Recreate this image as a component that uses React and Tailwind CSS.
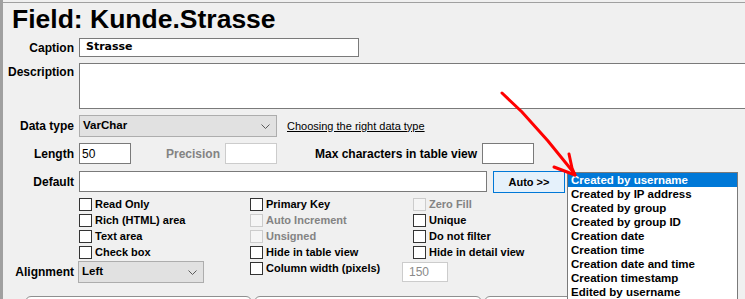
import React from "react";

const Chevron = () => (
  <svg width="9" height="5" viewBox="0 0 9 5" className="shrink-0">
    <path d="M0.5 0.5 L4.5 4.5 L8.5 0.5" fill="none" stroke="#5a5a5a" strokeWidth="1" />
  </svg>
);

const Select = ({ value, className }) => (
  <div
    className={`flex items-center justify-between h-[22px] bg-[#e1e1e1] border border-[#adadad] pl-[3px] pr-[6px] text-[11.5px] font-bold ${className}`}
  >
    <span>{value}</span>
    <Chevron />
  </div>
);

const Label = ({ children, className = "" }) => (
  <div className={`w-[71px] shrink-0 text-right text-[12px] font-bold leading-[14px] ${className}`}>
    {children}
  </div>
);

const Check = ({ label, disabled }) => (
  <div className="flex items-center h-[16px]">
    <span
      className={`w-[13px] h-[13px] shrink-0 border ${
        disabled ? "border-[#cccccc] bg-[#f5f5f5]" : "border-[#333333] bg-white"
      }`}
    />
    <span
      className={`ml-[3px] text-[11px] font-bold whitespace-nowrap ${
        disabled ? "text-[#838383]" : "text-black"
      }`}
    >
      {label}
    </span>
  </div>
);

const checks = [
  ["Read Only"],
  ["Primary Key"],
  ["Zero Fill", true],
  ["Rich (HTML) area"],
  ["Auto Increment", true],
  ["Unique"],
  ["Text area"],
  ["Unsigned", true],
  ["Do not filter"],
  ["Check box"],
  ["Hide in table view"],
  ["Hide in detail view"],
];

const autoItems = [
  "Created by username",
  "Created by IP address",
  "Created by group",
  "Created by group ID",
  "Creation date",
  "Creation time",
  "Creation date and time",
  "Creation timestamp",
  "Edited by username",
];

export default function App() {
  return (
    <div className="relative w-[745px] h-[299px] overflow-hidden flex bg-[#f0f0f0] text-black font-['Liberation_Sans',Arial,sans-serif]">
      <div className="w-[3px] shrink-0 bg-[#a0a0a0]" />
      <div className="flex-1 mt-[2px] border-t border-[#a0a0a0] flex flex-col">
        <h1 className="mt-[1px] pl-[9px] text-[26.5px] leading-[30px] font-bold whitespace-nowrap">
          Field: Kunde.Strasse
        </h1>

        {/* caption */}
        <div className="mt-[4px] flex items-center gap-[5px]">
          <Label>Caption</Label>
          <div className="w-[280px] h-[19px] border border-[#7a7a7a] bg-white pl-[6px] flex items-center text-[11px] font-bold font-['DejaVu_Sans',Verdana,sans-serif]">
            Strasse
          </div>
        </div>

        {/* description */}
        <div className="mt-[6px] flex items-start gap-[5px]">
          <Label className="pt-[2px]">Description</Label>
          <div className="w-[700px] h-[46px] shrink-0 border border-[#7a7a7a] bg-white" />
        </div>

        {/* data type */}
        <div className="mt-[6px] flex items-center gap-[5px]">
          <Label>Data type</Label>
          <Select value="VarChar" className="w-[198px]" />
          <a className="ml-[5px] text-[11px] underline whitespace-nowrap">Choosing the right data type</a>
        </div>

        {/* length */}
        <div className="mt-[6px] flex items-center">
          <Label>Length</Label>
          <div className="ml-[5px] w-[52px] h-[21px] border border-[#7a7a7a] bg-white pl-[2px] flex items-center text-[12px]">
            50
          </div>
          <div className="ml-[35px] w-[54px] text-[12px] font-bold text-[#838383] whitespace-nowrap">Precision</div>
          <div className="ml-[5px] w-[52px] h-[21px] border border-[#cccccc] bg-white" />
          <div className="ml-[38px] text-[12px] font-bold whitespace-nowrap">Max characters in table view</div>
          <div className="ml-[5px] w-[52px] h-[21px] border border-[#7a7a7a] bg-white" />
        </div>

        {/* default */}
        <div className="mt-[7px] flex items-start gap-[5px]">
          <Label className="h-[21px] flex items-center justify-end">Default</Label>
          <div className="w-[408px] h-[21px] border border-[#7a7a7a] bg-white" />
          <button className="ml-[1px] w-[72px] h-[22px] border border-[#0078d7] bg-[#e5f1fb] text-[11px] font-bold">
            Auto &gt;&gt;
          </button>
        </div>

        {/* checkboxes */}
        <div className="mt-[3px] pl-[76px] grid grid-cols-[171px_163px_1fr]">
          {checks.map(([label, disabled]) => (
            <Check key={label} label={label} disabled={disabled} />
          ))}
        </div>

        {/* alignment row */}
        <div className="flex items-start">
          <div className="mt-[1px] flex items-center gap-[4px]">
            <Label>Alignment</Label>
            <Select value="Left" className="w-[126px]" />
          </div>
          <div className="ml-[46px] w-[152px]">
            <Check label="Column width (pixels)" />
          </div>
          <div className="mt-[2px] w-[46px] h-[20px] border border-[#cccccc] bg-white pl-[6px] flex items-center text-[12px] text-[#8a8a8a]">
            150
          </div>
        </div>

        {/* tabs */}
        <div className="mt-[13px] ml-[22px] flex gap-[2px]">
          <div className="w-[227px] h-[12px] shrink-0 border border-[#8f8f8f] rounded-t-[6px] bg-white" />
          <div className="w-[228px] h-[12px] shrink-0 border border-[#8f8f8f] rounded-t-[6px] bg-white" />
          <div className="w-[228px] h-[12px] shrink-0 border border-[#8f8f8f] rounded-t-[6px] bg-white" />
        </div>
      </div>

      {/* auto dropdown */}
      <div className="absolute left-[567px] top-[172px] w-[171px] h-[140px] border border-[#7a7a7a] bg-white">
        {autoItems.map((item, i) => (
          <div
            key={item}
            className={`h-[14px] leading-[14px] pl-[3px] text-[11.5px] font-bold whitespace-nowrap ${
              i === 0 ? "bg-[#0078d7] text-white" : "text-black"
            }`}
          >
            {item}
          </div>
        ))}
      </div>

      {/* red arrow */}
      <svg className="absolute left-0 top-0 pointer-events-none" width="745" height="299">
        <g fill="none" stroke="#ff0000" strokeWidth="3" strokeLinecap="round">
          <path d="M502 93 L522 112 L548 141 L574 173" />
          <path d="M554 167 L575 175" />
          <path d="M569 154 L572 168 L575 175" />
        </g>
      </svg>
    </div>
  );
}
